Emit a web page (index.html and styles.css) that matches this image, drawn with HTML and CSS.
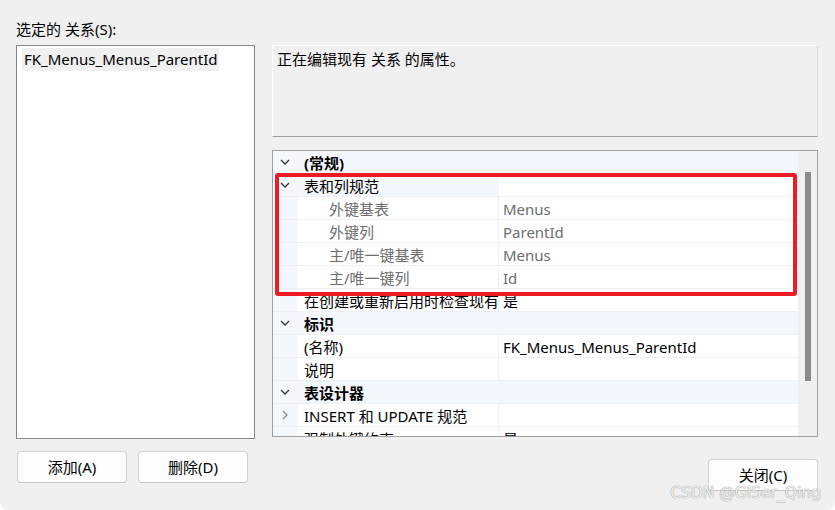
FILE: index.html
```html
<!DOCTYPE html>
<html lang="zh-CN">
<head>
<meta charset="utf-8">
<title>外键关系</title>
<link rel="stylesheet" href="styles.css">
</head>
<body>
<div class="window">
  <div class="label">选定的 关系(S):</div>
  <div class="main">
    <div class="left">
      <div class="listbox">
        <div class="item">FK_Menus_Menus_ParentId</div>
      </div>
      <div class="btnrow">
        <button class="btn">添加(A)</button>
        <button class="btn">删除(D)</button>
      </div>
    </div>
    <div class="right">
      <div class="desc">正在编辑现有 关系 的属性。</div>
      <div class="grid">
        <div class="rows">
          <div class="row cat">
            <span class="gut"><svg class="chev" viewBox="0 0 10 6"><path d="M1 1 L5 5 L9 1"/></svg></span>
            <span class="name b">(常规)</span><span class="val"></span>
          </div>
          <div class="row cat">
            <span class="gut"><svg class="chev" viewBox="0 0 10 6"><path d="M1 1 L5 5 L9 1"/></svg></span>
            <span class="name">表和列规范</span><span class="val white"></span>
          </div>
          <div class="row sub">
            <span class="gut"></span><span class="name">外键基表</span><span class="val">Menus</span>
          </div>
          <div class="row sub">
            <span class="gut"></span><span class="name">外键列</span><span class="val">ParentId</span>
          </div>
          <div class="row sub">
            <span class="gut"></span><span class="name">主/唯一键基表</span><span class="val">Menus</span>
          </div>
          <div class="row sub">
            <span class="gut"></span><span class="name">主/唯一键列</span><span class="val">Id</span>
          </div>
          <div class="row">
            <span class="gut"></span><span class="name">在创建或重新启用时检查现有数据</span><span class="val">是</span>
          </div>
          <div class="row cat">
            <span class="gut"><svg class="chev" viewBox="0 0 10 6"><path d="M1 1 L5 5 L9 1"/></svg></span>
            <span class="name b">标识</span><span class="val"></span>
          </div>
          <div class="row">
            <span class="gut"></span><span class="name">(名称)</span><span class="val">FK_Menus_Menus_ParentId</span>
          </div>
          <div class="row">
            <span class="gut"></span><span class="name">说明</span><span class="val"></span>
          </div>
          <div class="row cat">
            <span class="gut"><svg class="chev" viewBox="0 0 10 6"><path d="M1 1 L5 5 L9 1"/></svg></span>
            <span class="name b">表设计器</span><span class="val"></span>
          </div>
          <div class="row">
            <span class="gut"><svg class="chev right-chev" viewBox="0 0 6 10"><path d="M1 1 L5 5 L1 9"/></svg></span>
            <span class="name">INSERT 和 UPDATE 规范</span><span class="val"></span>
          </div>
          <div class="row">
            <span class="gut"></span><span class="name">强制外键约束</span><span class="val">是</span>
          </div>
        </div>
        <div class="scroll"><div class="thumb"></div></div>
        <div class="highlight"></div>
      </div>
      <div class="closerow">
        <button class="btn">关闭(C)</button>
      </div>
    </div>
  </div>
  <div class="watermark">CSDN @GISer_Qing</div>
</div>
</body>
</html>
```
FILE: styles.css
```css
html {
  background: #ffffff;
}
body {
  margin: 0;
  width: 835px;
  height: 510px;
  overflow: hidden;
  background: #f0f0f0;
  border-radius: 0 0 8px 8px;
  font-family: "Noto Sans", "Noto Sans CJK SC", sans-serif;
  font-size: 15px;
  color: #000;
}
.window {
  position: relative;
  height: 510px;
  box-sizing: border-box;
  padding: 19px 17px 0 16px;
}
.label {
  height: 20px;
  line-height: 20px;
  margin-bottom: 6px;
}
.main {
  display: flex;
  gap: 17px;
}
.left {
  width: 239px;
  display: flex;
  flex-direction: column;
}
.listbox {
  height: 394px;
  box-sizing: border-box;
  border: 1px solid #878787;
  background: #fff;
  padding: 2px 5px;
}
.item {
  display: inline-block;
  background: #f0f0f0;
  height: 23px;
  line-height: 23px;
  padding: 0 2px;
}
.btnrow {
  display: flex;
  gap: 11px;
  margin-top: 12px;
  padding-left: 1px;
}
.btn {
  width: 110px;
  height: 32px;
  box-sizing: border-box;
  border: 1px solid #d3d3d3;
  border-bottom-color: #c4c4c4;
  border-radius: 4px;
  background: #fdfdfd;
  font-family: "Noto Sans", "Noto Sans CJK SC", sans-serif;
  font-size: 15px;
  color: #000;
  padding: 0;
  line-height: 30px;
}
.right {
  width: 546px;
  display: flex;
  flex-direction: column;
}
.desc {
  height: 92px;
  box-sizing: border-box;
  border: 1px solid #fff;
  border-right-color: #dcdcdc;
  border-bottom-color: #a0a0a0;
  padding: 3px 4px;
  line-height: 20px;
}
.grid {
  position: relative;
  margin-top: 13px;
  height: 287px;
  box-sizing: border-box;
  border: 1px solid #a0a0a0;
  display: flex;
  overflow: hidden;
  background: #f0f0f0;
}
.rows {
  width: 525px;
  background: #fff;
}
.row {
  display: flex;
  height: 23px;
  box-sizing: border-box;
  border-bottom: 1px solid #edf1f7;
  line-height: 20px;
  padding-top: 2px;
}
.gut {
  width: 24px;
  flex: none;
  background: #f4f7fc;
  display: flex;
  align-items: center;
  justify-content: center;
  padding-right: 1px;
  margin-top: -2px;
}
.name {
  width: 201px;
  flex: none;
  box-sizing: border-box;
  padding-left: 6px;
  border-right: 1px solid #edf1f7;
  white-space: nowrap;
  overflow: hidden;
  margin-top: -2px;
  padding-top: 2px;
}
.val {
  flex: 1;
  padding-left: 4px;
  white-space: nowrap;
  overflow: hidden;
}
.cat {
  background: #f4f7fc;
}
.cat .name {
  border-right-color: transparent;
}
.val.white {
  background: #fff;
  margin-top: -2px;
}
.b {
  font-weight: bold;
}
.sub {
  color: #6d6d6d;
}
.sub .name {
  padding-left: 31px;
}
.chev {
  width: 10px;
  height: 6px;
  fill: none;
  stroke: #333;
  stroke-width: 1.3;
}
.right-chev {
  width: 6px;
  height: 10px;
  stroke: #8a8a8a;
}
.scroll {
  flex: 1;
  position: relative;
}
.thumb {
  position: absolute;
  left: 7px;
  top: 21px;
  width: 6px;
  height: 209px;
  background: #8a8a8a;
}
.highlight {
  position: absolute;
  left: 2px;
  top: 22px;
  width: 522px;
  height: 123px;
  box-sizing: border-box;
  border: 4px solid #ed1c24;
  border-radius: 3px;
}
.closerow {
  display: flex;
  justify-content: flex-end;
  margin-top: 22px;
}
.watermark {
  position: absolute;
  right: 14px;
  bottom: 8px;
  font-family: "DejaVu Sans", sans-serif;
  font-size: 15.5px;
  color: rgba(255, 255, 255, 0.85);
  text-shadow: 0 0 1px #9a9a9a, 0 0 1px #9a9a9a;
}
```
